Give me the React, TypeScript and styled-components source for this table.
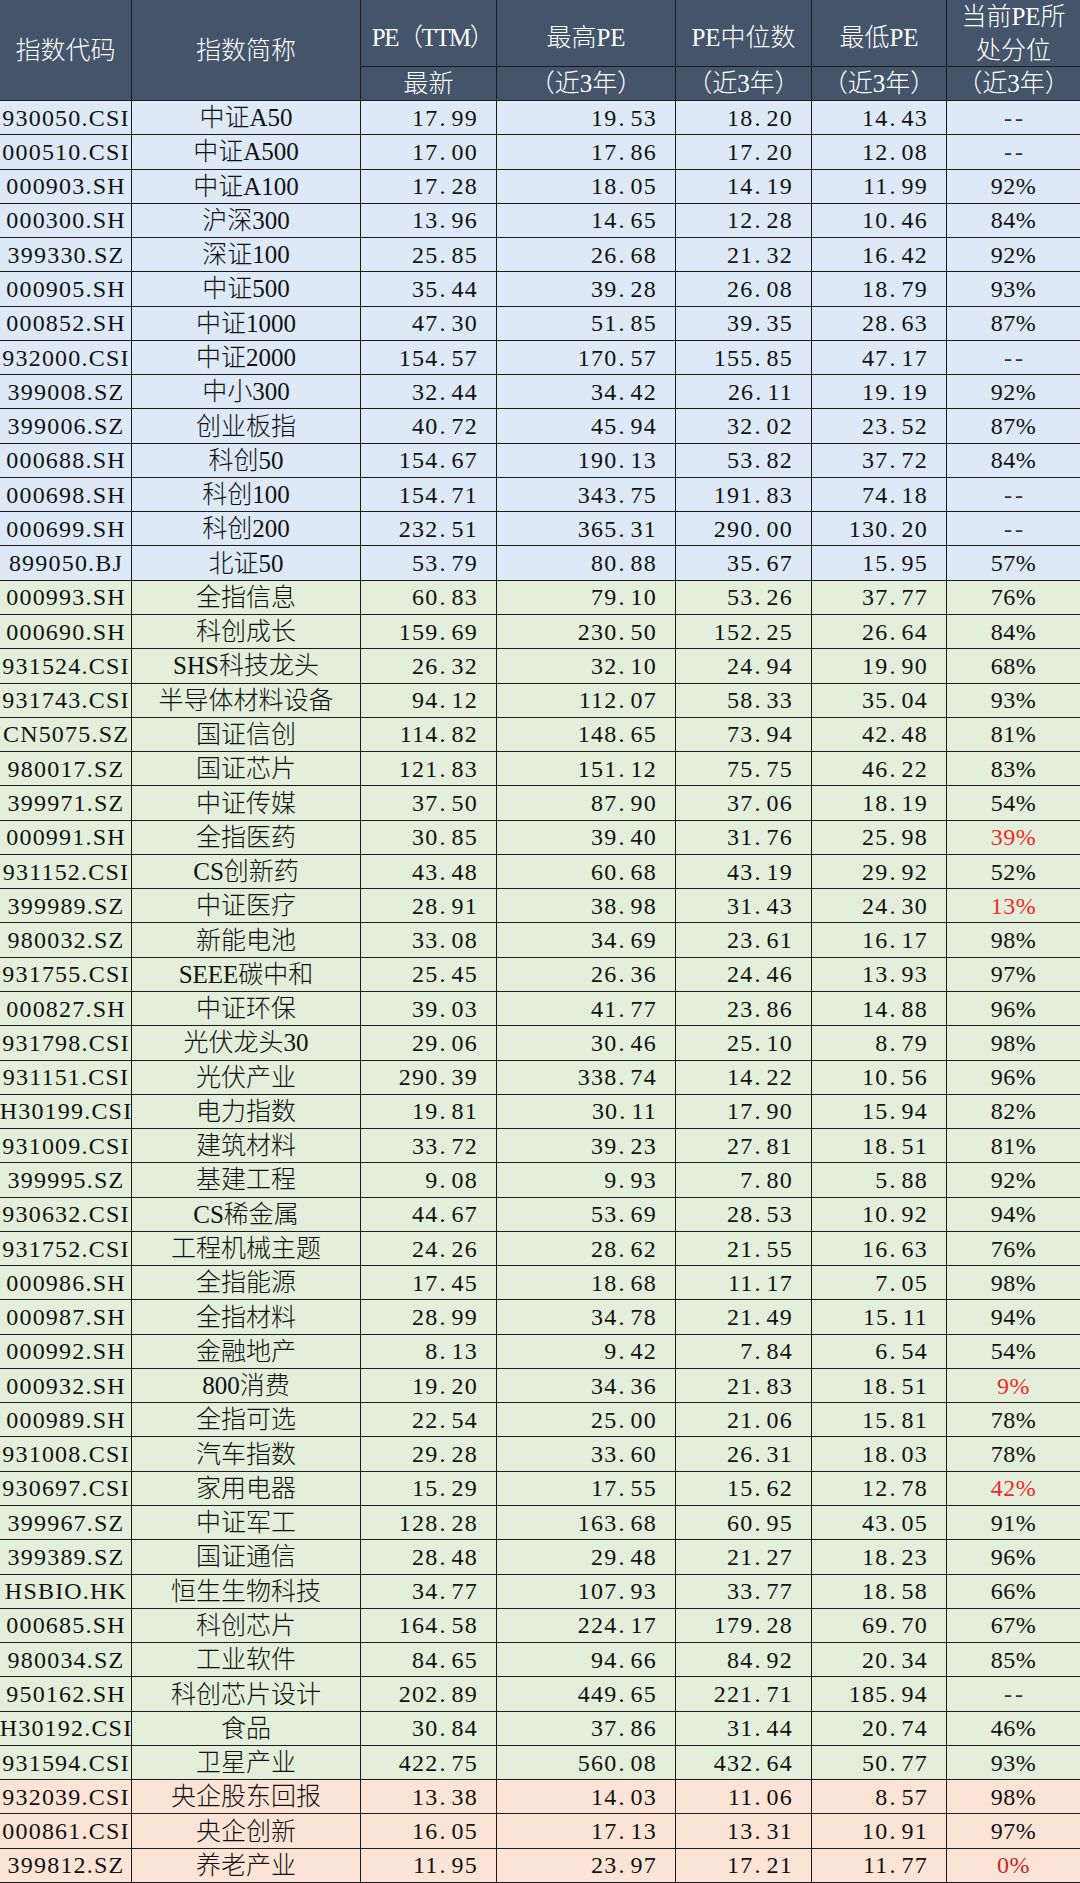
import React from 'react';
import styled, { createGlobalStyle } from 'styled-components';

type Band = 'blue' | 'green' | 'pink';
type Tone = 'plain' | 'red' | 'dark';

// code, name, PE(TTM), high, median, low, percentile
const blueRows = [
  ['930050.CSI', '中证A50', '17.99', '19.53', '18.20', '14.43', '--'],
  ['000510.CSI', '中证A500', '17.00', '17.86', '17.20', '12.08', '--'],
  ['000903.SH', '中证A100', '17.28', '18.05', '14.19', '11.99', '92%'],
  ['000300.SH', '沪深300', '13.96', '14.65', '12.28', '10.46', '84%'],
  ['399330.SZ', '深证100', '25.85', '26.68', '21.32', '16.42', '92%'],
  ['000905.SH', '中证500', '35.44', '39.28', '26.08', '18.79', '93%'],
  ['000852.SH', '中证1000', '47.30', '51.85', '39.35', '28.63', '87%'],
  ['932000.CSI', '中证2000', '154.57', '170.57', '155.85', '47.17', '--'],
  ['399008.SZ', '中小300', '32.44', '34.42', '26.11', '19.19', '92%'],
  ['399006.SZ', '创业板指', '40.72', '45.94', '32.02', '23.52', '87%'],
  ['000688.SH', '科创50', '154.67', '190.13', '53.82', '37.72', '84%'],
  ['000698.SH', '科创100', '154.71', '343.75', '191.83', '74.18', '--'],
  ['000699.SH', '科创200', '232.51', '365.31', '290.00', '130.20', '--'],
  ['899050.BJ', '北证50', '53.79', '80.88', '35.67', '15.95', '57%'],
];

const greenRows = [
  ['000993.SH', '全指信息', '60.83', '79.10', '53.26', '37.77', '76%'],
  ['000690.SH', '科创成长', '159.69', '230.50', '152.25', '26.64', '84%'],
  ['931524.CSI', 'SHS科技龙头', '26.32', '32.10', '24.94', '19.90', '68%'],
  ['931743.CSI', '半导体材料设备', '94.12', '112.07', '58.33', '35.04', '93%'],
  ['CN5075.SZ', '国证信创', '114.82', '148.65', '73.94', '42.48', '81%'],
  ['980017.SZ', '国证芯片', '121.83', '151.12', '75.75', '46.22', '83%'],
  ['399971.SZ', '中证传媒', '37.50', '87.90', '37.06', '18.19', '54%'],
  ['000991.SH', '全指医药', '30.85', '39.40', '31.76', '25.98', '39%'],
  ['931152.CSI', 'CS创新药', '43.48', '60.68', '43.19', '29.92', '52%'],
  ['399989.SZ', '中证医疗', '28.91', '38.98', '31.43', '24.30', '13%'],
  ['980032.SZ', '新能电池', '33.08', '34.69', '23.61', '16.17', '98%'],
  ['931755.CSI', 'SEEE碳中和', '25.45', '26.36', '24.46', '13.93', '97%'],
  ['000827.SH', '中证环保', '39.03', '41.77', '23.86', '14.88', '96%'],
  ['931798.CSI', '光伏龙头30', '29.06', '30.46', '25.10', '8.79', '98%'],
  ['931151.CSI', '光伏产业', '290.39', '338.74', '14.22', '10.56', '96%'],
  ['H30199.CSI', '电力指数', '19.81', '30.11', '17.90', '15.94', '82%'],
  ['931009.CSI', '建筑材料', '33.72', '39.23', '27.81', '18.51', '81%'],
  ['399995.SZ', '基建工程', '9.08', '9.93', '7.80', '5.88', '92%'],
  ['930632.CSI', 'CS稀金属', '44.67', '53.69', '28.53', '10.92', '94%'],
  ['931752.CSI', '工程机械主题', '24.26', '28.62', '21.55', '16.63', '76%'],
  ['000986.SH', '全指能源', '17.45', '18.68', '11.17', '7.05', '98%'],
  ['000987.SH', '全指材料', '28.99', '34.78', '21.49', '15.11', '94%'],
  ['000992.SH', '金融地产', '8.13', '9.42', '7.84', '6.54', '54%'],
  ['000932.SH', '800消费', '19.20', '34.36', '21.83', '18.51', '9%'],
  ['000989.SH', '全指可选', '22.54', '25.00', '21.06', '15.81', '78%'],
  ['931008.CSI', '汽车指数', '29.28', '33.60', '26.31', '18.03', '78%'],
  ['930697.CSI', '家用电器', '15.29', '17.55', '15.62', '12.78', '42%'],
  ['399967.SZ', '中证军工', '128.28', '163.68', '60.95', '43.05', '91%'],
  ['399389.SZ', '国证通信', '28.48', '29.48', '21.27', '18.23', '96%'],
  ['HSBIO.HK', '恒生生物科技', '34.77', '107.93', '33.77', '18.58', '66%'],
  ['000685.SH', '科创芯片', '164.58', '224.17', '179.28', '69.70', '67%'],
  ['980034.SZ', '工业软件', '84.65', '94.66', '84.92', '20.34', '85%'],
  ['950162.SH', '科创芯片设计', '202.89', '449.65', '221.71', '185.94', '--'],
  ['H30192.CSI', '食品', '30.84', '37.86', '31.44', '20.74', '46%'],
  ['931594.CSI', '卫星产业', '422.75', '560.08', '432.64', '50.77', '93%'],
];

const pinkRows = [
  ['932039.CSI', '央企股东回报', '13.38', '14.03', '11.06', '8.57', '98%'],
  ['000861.CSI', '央企创新', '16.05', '17.13', '13.31', '10.91', '97%'],
  ['399812.SZ', '养老产业', '11.95', '23.97', '17.21', '11.77', '0%'],
];

const toneOf: Record<string, Tone> = {
  '000991.SH': 'red',
  '399989.SZ': 'red',
  '000932.SH': 'red',
  '930697.CSI': 'red',
  '399812.SZ': 'dark',
};

const bands: Record<Band, string> = {
  blue: '#dde9f6',
  green: '#e3efda',
  pink: '#fbe3d6',
};

const tones: Record<Tone, string> = {
  plain: '#111',
  red: '#ee2b2b',
  dark: '#c42a2a',
};

const GlobalStyle = createGlobalStyle`
  html, body {
    margin: 0;
    padding: 0;
    background: #fff;
  }
  body {
    font-family: "Liberation Serif", "Noto Sans CJK SC", serif;
  }
`;

const Sheet = styled.div`
  box-sizing: border-box;
  width: 1080px;
  height: 1883px;
  padding-bottom: 1px;
  display: grid;
  grid-template-columns: 131px 228px 135px 178px 135px 134px 133px;
  grid-template-rows: 66px 33px repeat(52, 1fr);
  gap: 1px;
  background: #1b1b1b;
  font-family: "Liberation Serif", "Noto Sans CJK SC", serif;
  font-weight: 300;
`;

const HeadCell = styled.div<{ $tall?: boolean; $lines?: boolean; $tight?: boolean }>`
  grid-row: ${(p) => (p.$tall ? 'span 2' : 'auto')};
  background: #44546a;
  color: #fff;
  font-size: 25px;
  line-height: ${(p) => (p.$lines ? '34px' : '1')};
  letter-spacing: ${(p) => (p.$tight ? '-1.5px' : '0')};
  display: flex;
  align-items: center;
  justify-content: center;
  text-align: center;
  white-space: nowrap;
  padding-top: ${(p) => (p.$tall ? '0' : p.$lines ? '2px' : '8px')};
  padding-left: ${(p) => (p.$tight ? '8px' : '0')};
  box-sizing: border-box;
  overflow: visible;
`;

const SubHead = styled(HeadCell)`
  padding-top: 0;
`;

const Cell = styled.div<{ $band: Band; $align?: 'left' | 'center' | 'right' }>`
  background: ${(p) => bands[p.$band]};
  color: #111;
  font-size: 24px;
  line-height: 1;
  display: flex;
  align-items: center;
  justify-content: ${(p) =>
    p.$align === 'right' ? 'flex-end' : p.$align === 'left' ? 'flex-start' : 'center'};
  white-space: nowrap;
  overflow: hidden;
`;

const CodeCell = styled(Cell)`
  letter-spacing: 1.2px;
  padding-left: 1px;
`;

const NameCell = styled(Cell)`
  font-size: 25px;
`;

const NumCell = styled(Cell)`
  letter-spacing: 1.2px;
  padding-right: 18px;
`;

const Dot = styled.span`
  display: inline-block;
  width: 13.2px;
  text-align: left;
  padding-left: 1px;
  box-sizing: border-box;
`;

const PctCell = styled(Cell)<{ $tone: Tone }>`
  color: ${(p) => tones[p.$tone]};
  letter-spacing: 0.5px;
`;

const Dash = styled.span`
  letter-spacing: 3px;
  margin-right: -3px;
  color: #333;
`;

const Num: React.FC<{ value: string }> = ({ value }) => {
  const [whole, frac] = value.split('.');
  return (
    <>
      {whole}
      <Dot>.</Dot>
      {frac}
    </>
  );
};

const DataRow: React.FC<{ row: string[]; band: Band }> = ({ row, band }) => {
  const [code, name, pe, high, median, low, pct] = row;
  const tone = toneOf[code] ?? 'plain';
  return (
    <>
      <CodeCell $band={band}>{code}</CodeCell>
      <NameCell $band={band}>{name}</NameCell>
      {[pe, high, median, low].map((v, i) => (
        <NumCell key={i} $band={band} $align="right">
          <Num value={v} />
        </NumCell>
      ))}
      <PctCell $band={band} $tone={tone}>
        {pct === '--' ? <Dash>--</Dash> : pct}
      </PctCell>
    </>
  );
};

const App: React.FC = () => {
  return (
    <>
      <GlobalStyle />
      <Sheet>
        <HeadCell $tall>指数代码</HeadCell>
        <HeadCell $tall>指数简称</HeadCell>
        <HeadCell $tight>PE（TTM）</HeadCell>
        <HeadCell>最高PE</HeadCell>
        <HeadCell>PE中位数</HeadCell>
        <HeadCell>最低PE</HeadCell>
        <HeadCell $lines>
          当前PE所
          <br />
          处分位
        </HeadCell>
        <SubHead>最新</SubHead>
        <SubHead>（近3年）</SubHead>
        <SubHead>（近3年）</SubHead>
        <SubHead>（近3年）</SubHead>
        <SubHead>（近3年）</SubHead>

        {blueRows.map((r) => (
          <DataRow key={r[0]} row={r} band="blue" />
        ))}
        {greenRows.map((r) => (
          <DataRow key={r[0]} row={r} band="green" />
        ))}
        {pinkRows.map((r) => (
          <DataRow key={r[0]} row={r} band="pink" />
        ))}
      </Sheet>
    </>
  );
};

export default App;
